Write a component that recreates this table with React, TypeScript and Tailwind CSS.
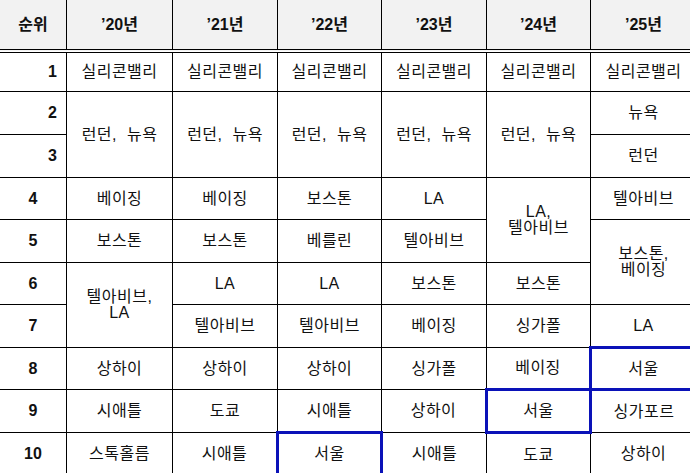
import React from 'react';
import clsx from 'clsx';

interface CellProps {
  children?: React.ReactNode;
  rowSpan?: number;
  blue?: boolean;
}

const Cell = ({ children, rowSpan, blue }: CellProps) => {
  return (
    <td
      rowSpan={rowSpan}
      className={clsx(
        "text-center align-middle p-0 text-[16px] leading-[16px] tracking-[0.5px] text-[#111]",
        blue ? "border-[3px] border-[#0a12b8]" : "border border-black"
      )}
    >
      {children}
    </td>
  );
};

const Rank = ({ n, right }: { n: number; right?: boolean }) => (
  <td
    className={clsx(
      "border border-black align-middle p-0 font-bold text-[16px] text-[#111]",
      right ? "text-right pr-[9px]" : "text-center"
    )}
  >
    {n}
  </td>
);

const Head = ({ children }: { children: React.ReactNode }) => (
  <th className="bg-[#f2f2f2] border border-black border-b-[4px] border-b-black border-double font-bold text-[16px] text-[#111] align-middle p-0 pt-[1px]">
    {children}
  </th>
);

export default function App() {
  return (
    <div className="w-[690px] h-[473px] overflow-hidden bg-white">
      <table
        className="border-collapse table-fixed -ml-px -mt-px w-[697px]"
        style={{ fontFamily: '"Liberation Sans", "Noto Sans CJK KR", sans-serif' }}
      >
        <colgroup>
          <col className="w-[67px]" />
          <col className="w-[106px]" />
          <col className="w-[105px]" />
          <col className="w-[104px]" />
          <col className="w-[105px]" />
          <col className="w-[104px]" />
          <col className="w-[106px]" />
        </colgroup>
        <thead>
          <tr className="h-[51px]">
            <Head>순위</Head>
            <Head>’20년</Head>
            <Head>’21년</Head>
            <Head>’22년</Head>
            <Head>’23년</Head>
            <Head>’24년</Head>
            <Head>’25년</Head>
          </tr>
        </thead>
        <tbody>
          <tr className="h-[41px]">
            <Rank n={1} right />
            <Cell>실리콘밸리</Cell>
            <Cell>실리콘밸리</Cell>
            <Cell>실리콘밸리</Cell>
            <Cell>실리콘밸리</Cell>
            <Cell>실리콘밸리</Cell>
            <Cell>실리콘밸리</Cell>
          </tr>
          <tr className="h-[43px]">
            <Rank n={2} right />
            <Cell rowSpan={2}>런던,&nbsp; 뉴욕</Cell>
            <Cell rowSpan={2}>런던,&nbsp; 뉴욕</Cell>
            <Cell rowSpan={2}>런던,&nbsp; 뉴욕</Cell>
            <Cell rowSpan={2}>런던,&nbsp; 뉴욕</Cell>
            <Cell rowSpan={2}>런던,&nbsp; 뉴욕</Cell>
            <Cell>뉴욕</Cell>
          </tr>
          <tr className="h-[43px]">
            <Rank n={3} right />
            <Cell>런던</Cell>
          </tr>
          <tr className="h-[42px]">
            <Rank n={4} />
            <Cell>베이징</Cell>
            <Cell>베이징</Cell>
            <Cell>보스톤</Cell>
            <Cell>LA</Cell>
            <Cell rowSpan={2}>
              LA,
              <br />
              텔아비브
            </Cell>
            <Cell>텔아비브</Cell>
          </tr>
          <tr className="h-[43px]">
            <Rank n={5} />
            <Cell>보스톤</Cell>
            <Cell>보스톤</Cell>
            <Cell>베를린</Cell>
            <Cell>텔아비브</Cell>
            <Cell rowSpan={2}>
              보스톤,
              <br />
              베이징
            </Cell>
          </tr>
          <tr className="h-[42px]">
            <Rank n={6} />
            <Cell rowSpan={2}>
              텔아비브,
              <br />
              LA
            </Cell>
            <Cell>LA</Cell>
            <Cell>LA</Cell>
            <Cell>보스톤</Cell>
            <Cell>보스톤</Cell>
          </tr>
          <tr className="h-[43px]">
            <Rank n={7} />
            <Cell>텔아비브</Cell>
            <Cell>텔아비브</Cell>
            <Cell>베이징</Cell>
            <Cell>싱가폴</Cell>
            <Cell>LA</Cell>
          </tr>
          <tr className="h-[42px]">
            <Rank n={8} />
            <Cell>상하이</Cell>
            <Cell>상하이</Cell>
            <Cell>상하이</Cell>
            <Cell>싱가폴</Cell>
            <Cell>베이징</Cell>
            <Cell blue>서울</Cell>
          </tr>
          <tr className="h-[43px]">
            <Rank n={9} />
            <Cell>시애틀</Cell>
            <Cell>도쿄</Cell>
            <Cell>시애틀</Cell>
            <Cell>상하이</Cell>
            <Cell blue>서울</Cell>
            <Cell>싱가포르</Cell>
          </tr>
          <tr className="h-[43px]">
            <Rank n={10} />
            <Cell>스톡홀름</Cell>
            <Cell>시애틀</Cell>
            <Cell blue>서울</Cell>
            <Cell>시애틀</Cell>
            <Cell>도쿄</Cell>
            <Cell>상하이</Cell>
          </tr>
        </tbody>
      </table>
    </div>
  );
}
